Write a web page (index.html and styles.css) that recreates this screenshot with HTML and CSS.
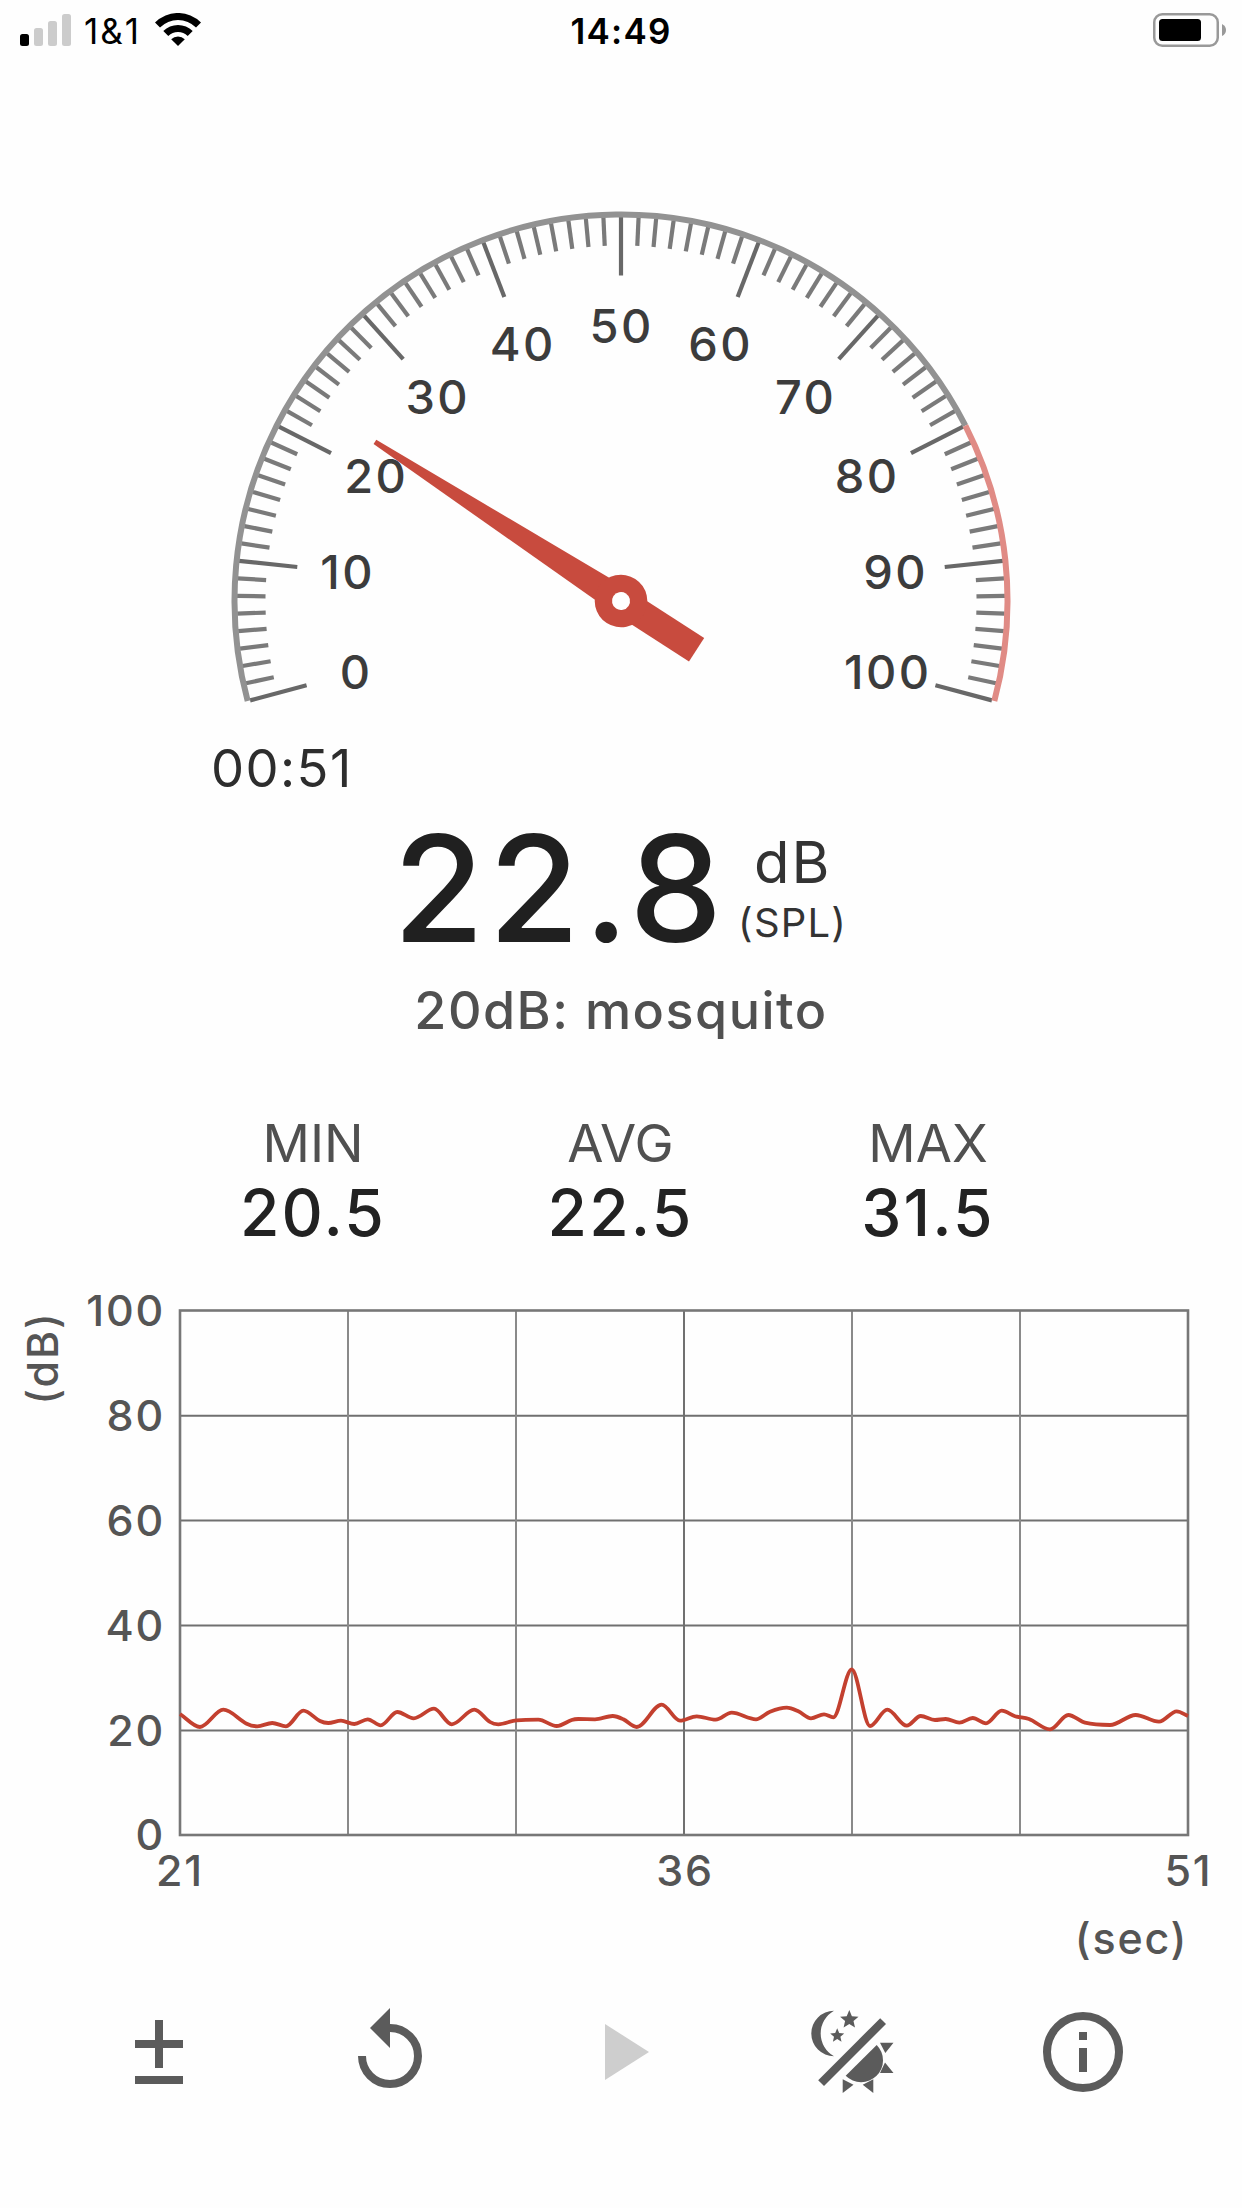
FILE: index.html
```
<!DOCTYPE html>
<html lang="en">

<head>
    <meta charset="UTF-8">
    <meta name="viewport" content="width=device-width, initial-scale=1.0">
    <title>Sound Meter</title>
    <link rel="stylesheet" href="styles.css">
</head>

<body>
    <header class="status-bar">
        <div class="status-left">
            <svg class="signal" width="51" height="32" viewBox="0 0 51 32">
                <rect x="0" y="20" width="9" height="12" rx="2.5" fill="#000" />
                <rect x="14" y="14" width="9" height="18" rx="2.5" fill="#ccc" />
                <rect x="28" y="7" width="9" height="25" rx="2.5" fill="#ccc" />
                <rect x="42" y="0" width="9" height="32" rx="2.5" fill="#ccc" />
            </svg>
            <span class="carrier">1&amp;1</span>
            <svg class="wifi" width="46" height="33" viewBox="0 0 46 33">
                <path d="M0 9.5A32.5 32.5 0 0 1 46 9.5L41 14.5A25.5 25.5 0 0 0 5 14.5Z" />
                <path d="M8.3 18A21 21 0 0 1 37.7 18L32.7 23A13.8 13.8 0 0 0 13.3 23Z" />
                <path d="M16.2 26.2A9.8 9.8 0 0 1 29.8 26.2L23 33Z" />
            </svg>
        </div>
        <div class="clock">14:49</div>
        <div class="status-right">
            <svg width="73" height="34" viewBox="0 0 73 34">
                <rect x="1.25" y="1.25" width="63.5" height="31.5" rx="8" fill="none" stroke="#999" stroke-width="2.5" />
                <rect x="6" y="6" width="42" height="22" rx="3.5" />
                <path d="M69 11Q73 13 73 17T69 23Z" fill="#999" />
            </svg>
        </div>
    </header>

    <main>
        <!-- Gauge -->
        <svg class="gauge" width="1242" height="660" viewBox="0 60 1242 660">
            <g id="ticks"></g>
            <path id="arcNormal" class="arc" />
            <path id="arcLoud" class="arc arc-loud" />
            <g class="gauge-labels">
                <text x="355" y="689">0</text>
                <text x="346.5" y="589">10</text>
                <text x="375" y="493">20</text>
                <text x="436.500" y="414">30</text>
                <text x="521.5" y="361">40</text>
                <text x="620.5" y="343">50</text>
                <text x="719.5" y="361">60</text>
                <text x="804.5" y="414">70</text>
                <text x="866" y="493">80</text>
                <text x="894.5" y="589">90</text>
                <text x="886.5" y="689">100</text>
            </g>
            <g id="needle" class="needle">
                <path d="M328 598.5L621 587H711V615H621L328 603.5Z" />
                <circle cx="621" cy="601" r="26.3" />
                <circle cx="621" cy="601" r="9" fill="#fff" />
            </g>
        </svg>

        <div class="timer">00:51</div>

        <div class="reading">
            <span class="value">22.8</span>
            <div class="unit">
                <span class="db">dB</span>
                <span class="spl">(SPL)</span>
            </div>
        </div>
        <div class="compare">20dB: mosquito</div>

        <div class="stats">
            <div class="stat">
                <span class="stat-name">MIN</span>
                <span class="stat-value">20.5</span>
            </div>
            <div class="stat">
                <span class="stat-name">AVG</span>
                <span class="stat-value">22.5</span>
            </div>
            <div class="stat">
                <span class="stat-name">MAX</span>
                <span class="stat-value">31.5</span>
            </div>
        </div>

        <!-- History chart -->
        <svg class="chart" width="1242" height="720" viewBox="0 1260 1242 720">
            <g class="grid">
                <path d="M180 1415.7H1188M180 1520.6H1188M180 1625.5H1188M180 1730.4H1188" />
                <path class="thin" d="M348 1310V1835M516 1310V1835M852 1310V1835M1020 1310V1835" />
                <path d="M684 1310V1835" />
                <rect x="180" y="1310.5" width="1008" height="524.5" />
            </g>
            <path id="line" class="line" transform="translate(180 1310.4)" />
            <g class="axis axis-y">
                <text x="165" y="1326">100</text>
                <text x="165" y="1431">80</text>
                <text x="165" y="1536">60</text>
                <text x="165" y="1641">40</text>
                <text x="165" y="1746">20</text>
                <text x="165" y="1850">0</text>
            </g>
            <g class="axis axis-x">
                <text x="180" y="1885.5">21</text>
                <text x="685" y="1885.5">36</text>
                <text x="1188.5" y="1885.5">51</text>
                <text x="1131.500" y="1954">(sec)</text>
                <text transform="translate(58 1358) rotate(-90)">(dB)</text>
            </g>
        </svg>
    </main>

    <nav class="toolbar">
        <svg class="icon" viewBox="0 0 100 100">
            <path d="M46 18h8v20h20v8H54v20h-8V46H26v-8h20zM26 74h48v8H26z" />
        </svg>
        <svg class="icon" viewBox="0 0 100 100">
            <path d="M22 54A28 28 0 1 0 50 26" fill="none" stroke="#5b5b5b" stroke-width="8" />
            <path d="M50 6V46L30 26Z" />
        </svg>
        <svg class="icon disabled" viewBox="0 0 100 100">
            <path d="M34 22L78 50L34 78Z" />
        </svg>
        <svg class="icon" viewBox="0 0 100 100">
            <path d="M32 8.8A22.6 22.6 0 1 0 32 54.2A26 26 0 0 1 32 8.8Z" />
            <path id="starBig" />
            <path id="starSmall" />
            <path d="M78.2 16.2L84 22L22 84L16.200 78.2Z" />
            <path d="M74.7 43A21.8 21.8 0 0 1 43.7 73.7Z" />
            <path d="M78 40.7H91.5L83.3 51ZM83 60.5L91.5 71H78ZM40.7 77.3L51.5 82.7L40.7 91ZM71.3 77.3L60.7 82.7L71.3 91Z" />
        </svg>
        <svg class="icon" viewBox="0 0 100 100">
            <circle cx="50" cy="50" r="36" fill="none" stroke="#5b5b5b" stroke-width="8" />
            <path d="M46 30h8v8h-8zM46 46h8v24h-8z" />
        </svg>
    </nav>

    <script>
        var cx = 621, cy = 601;

        // 0 dB sits 15 degrees below the horizontal, 100 dB mirrors it
        function point(db, r) {
            var a = (195 - db * 2.1) * Math.PI / 180;
            return (cx + r * Math.cos(a)).toFixed(2) + ' ' + (cy - r * Math.sin(a)).toFixed(2);
        }

        function arc(from, to) {
            return 'M' + point(from, 386.5) + 'A386.5 386.5 0 0 1 ' + point(to, 386.5);
        }

        var ticks = '';
        for (var i = 0; i <= 80; i++) {
            var major = i % 8 === 0;
            ticks += '<path class="' + (major ? 'major' : 'minor') + '" d="M' +
                point(i * 1.25, 384) + 'L' + point(i * 1.25, major ? 325.5 : 355.5) + '"/>';
        }
        document.getElementById('ticks').innerHTML = ticks;
        document.getElementById('arcNormal').setAttribute('d', arc(0, 80));
        document.getElementById('arcLoud').setAttribute('d', arc(80, 100));
        document.getElementById('needle').setAttribute('transform',
            'rotate(' + (22.8 * 2.1 - 15) + ' ' + cx + ' ' + cy + ')');

        // Stars of the day / night icon
        function star(x, y, r) {
            var d = [];
            for (var i = 0; i < 10; i++) {
                var a = (i * 36 - 90) * Math.PI / 180;
                var q = i % 2 ? r * 0.45 : r;
                d.push((x + q * Math.cos(a)).toFixed(1) + ' ' + (y + q * Math.sin(a)).toFixed(1));
            }
            return 'M' + d.join('L') + 'Z';
        }
        document.getElementById('starBig').setAttribute('d', star(47.3, 17.7, 9.7));
        document.getElementById('starSmall').setAttribute('d', star(35.2, 33.7, 7.4));

        // History of the last 30 seconds, in plot coordinates
        var samples = [
            [0, 403.6], [20, 416.6], [43.3, 399.3], [66.7, 413.3], [77.3, 415.9], [92.3, 412.6],
            [106, 415.9], [123.3, 400.3], [140, 410.6], [148.3, 412.6], [161, 410.3], [174.3, 413.6],
            [187.7, 408.9], [200.7, 414.9], [217.3, 401.6], [233.7, 407.9], [254, 398.3], [271.7, 413.9],
            [294.3, 399.3], [310, 411.6], [318.3, 413.9], [336.7, 409.9], [358.3, 409.3], [376.7, 415.6],
            [391.7, 409.6], [398.3, 408.6], [415, 408.9], [432.7, 405.6], [443.3, 408.9], [456.7, 416.6],
            [481.7, 394.3], [500, 410.2], [516.7, 405.9], [535.7, 409.3], [551.7, 402.3], [576, 408.9],
            [590, 401.3], [606.7, 397.3], [618.3, 400.9], [631, 407.9], [644, 403.9], [653.3, 406.9],
            [671.7, 358.9], [690, 415.6], [707.3, 399.3], [726.7, 415.3], [740.7, 405.6], [755, 409.6],
            [765.7, 408.6], [779.3, 412.3], [792.7, 407.6], [806, 412.9], [821.7, 400.3], [835, 405.9],
            [849, 408.6], [870, 418.9], [888.3, 404.6], [905, 412.3], [930, 414.6], [955.7, 404.6],
            [979, 411.3], [996.7, 401], [1008, 405.6]
        ];

        // Monotone smoothing, so the peaks stay on the samples
        function smooth(p) {
            var n = p.length, k = [], m = [];
            for (var i = 0; i < n - 1; i++) {
                k.push((p[i + 1][1] - p[i][1]) / (p[i + 1][0] - p[i][0]));
            }
            m.push(k[0]);
            for (i = 1; i < n - 1; i++) {
                var s = (p[i + 1][1] - p[i - 1][1]) / (p[i + 1][0] - p[i - 1][0]);
                var max = 3 * Math.min(Math.abs(k[i - 1]), Math.abs(k[i]));
                m.push(k[i - 1] * k[i] <= 0 ? 0 : Math.max(-max, Math.min(max, s)));
            }
            m.push(k[n - 2]);
            var d = 'M' + p[0].join(' ');
            for (i = 0; i < n - 1; i++) {
                var h = (p[i + 1][0] - p[i][0]) / 3;
                d += 'C' + [p[i][0] + h, p[i][1] + h * m[i],
                    p[i + 1][0] - h, p[i + 1][1] - h * m[i + 1], p[i + 1][0], p[i + 1][1]].join(' ');
            }
            return d;
        }
        document.getElementById('line').setAttribute('d', smooth(samples));
    </script>
</body>

</html>
```
FILE: styles.css
```
* {
    box-sizing: border-box;
}

body {
    margin: 0;
    width: 1242px;
    height: 2208px;
    overflow: hidden;
    background-color: #fefefe;
    font-family: Inter, "Liberation Sans", sans-serif;
}

svg {
    display: block;
}

/* Status bar */
.status-bar {
    display: grid;
    grid-template-columns: 1fr auto 1fr;
    height: 60px;
    padding: 0 16px 0 20px;
    color: #000;
    font-size: 35px;
    line-height: 62px;
}

.status-left {
    display: flex;
}

.signal {
    margin-top: 14px;
}

.carrier {
    margin-left: 13px;
    letter-spacing: 2px;
}

.wifi {
    margin: 13px 0 0 14px;
}

.clock {
    margin-right: 4px;
    font-weight: 600;
    letter-spacing: 1.2px;
}

.status-right {
    display: flex;
    justify-content: flex-end;
    padding-top: 13px;
}

/* Gauge */
.arc {
    fill: none;
    stroke: #929292;
    stroke-width: 6;
}

.arc-loud {
    stroke: #e08b85;
}

.major,
.minor {
    stroke: #686868;
    stroke-width: 4.2;
}

.minor {
    stroke: #7a7a7a;
}

.gauge-labels {
    fill: #3c3c3c;
    font-size: 47px;
    font-weight: 450;
    letter-spacing: 2.4px;
    text-anchor: middle;
    transform: translateX(1.2px);
}

.needle {
    fill: #c84b3e;
}

/* Readings */
.timer {
    margin-top: 18px;
    padding-left: 211px;
    color: #2d2d2d;
    font-size: 52.5px;
    letter-spacing: 1.4px;
    line-height: 60px;
}

.reading {
    display: flex;
    height: 150px;
    margin-top: 15px;
    padding-left: 393px;
}

.value {
    color: #202020;
    font-size: 148px;
    font-weight: 500;
    letter-spacing: 4.2px;
    line-height: 151px;
}

.unit {
    display: flex;
    flex-direction: column;
    align-items: center;
    width: 118px;
    margin-left: 7px;
    padding-top: 17px;
    color: #333;
}

.db {
    font-size: 58px;
    letter-spacing: 2px;
    line-height: 64px;
}

.spl {
    font-size: 40px;
    letter-spacing: 1.2px;
    line-height: 58px;
}

.compare {
    margin-top: 18px;
    color: #505050;
    font-size: 52px;
    font-weight: 500;
    letter-spacing: 1.5px;
    line-height: 60px;
    text-align: center;
}

.stats {
    display: grid;
    grid-template-columns: repeat(3, 307.5px);
    justify-content: center;
    height: 148px;
    margin-top: 72px;
    padding-right: 1px;
}

.stat {
    display: flex;
    flex-direction: column;
    align-items: center;
}

.stat-name {
    color: #505050;
    font-size: 52.5px;
    line-height: 60px;
}

.stat-value {
    margin-top: 5px;
    color: #222;
    font-size: 64px;
    font-weight: 500;
    letter-spacing: 2.2px;
    line-height: 70px;
}

/* Chart */
.chart {
    margin-top: -1px;
}

.grid {
    fill: none;
    stroke: #707070;
    stroke-width: 2;
}

.grid .thin {
    stroke: #8a8a8a;
}

.grid rect {
    stroke: #777;
    stroke-width: 2.6;
}

.line {
    fill: none;
    stroke: #c3402f;
    stroke-width: 3.8;
    stroke-linejoin: round;
}

.axis {
    fill: #555;
    font-size: 43px;
    font-weight: 500;
    letter-spacing: 1.8px;
}

.axis-y {
    text-anchor: end;
}

.axis-x {
    text-anchor: middle;
}

/* Toolbar */
.toolbar {
    display: flex;
    justify-content: space-between;
    margin-top: 22px;
    padding: 0 109px;
}

.icon {
    width: 100px;
    height: 100px;
    fill: #5b5b5b;
}

.disabled {
    fill: #cecece;
}
```
